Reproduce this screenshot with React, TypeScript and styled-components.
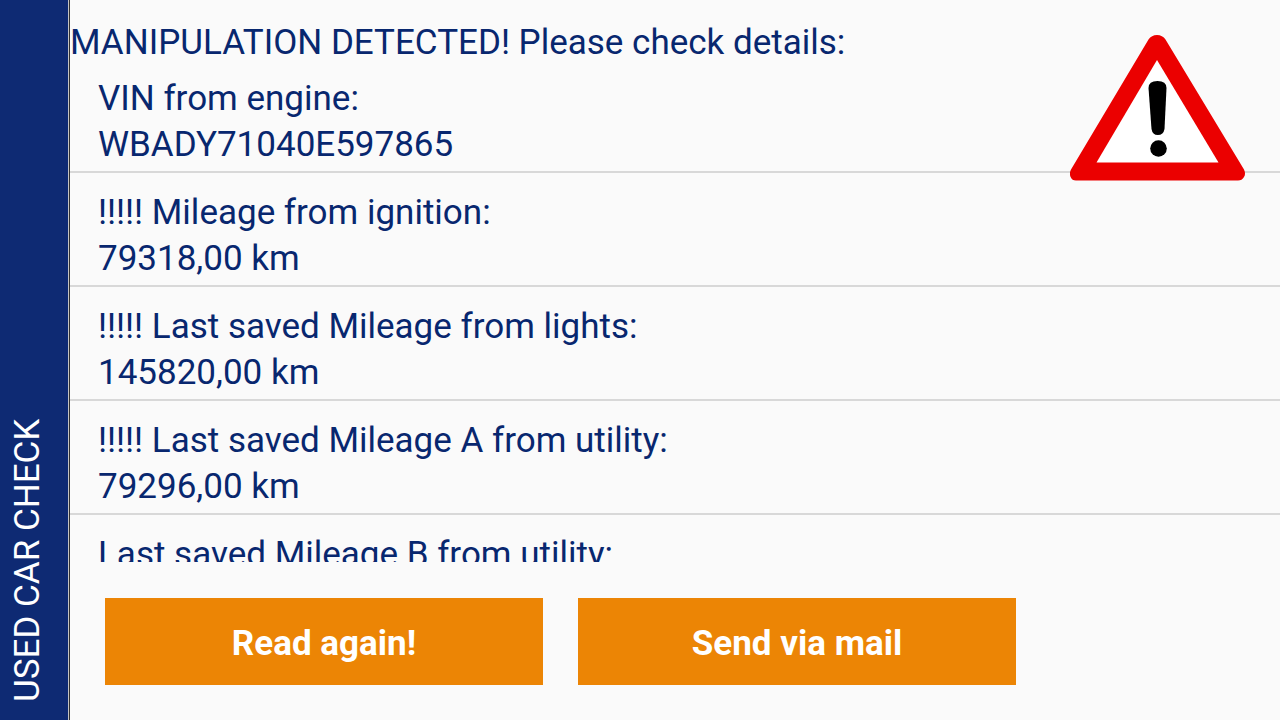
import React from "react";
import styled, { createGlobalStyle } from "styled-components";

const GlobalStyle = createGlobalStyle`
  * { box-sizing: border-box; }
  body {
    margin: 0;
    background: #fafafa;
    color: #08276f;
    font-family: Roboto, "Liberation Sans", sans-serif;
    font-size: 35px;
  }
`;

const Screen = styled.div`
  display: flex;
  height: 100vh;
`;

const Sidebar = styled.aside`
  flex: none;
  display: flex;
  width: 70px;
  padding: 0 20px 18px 7px;
  background: #0e2a73;
  border-right: 1px solid #333333;
  box-shadow: inset -1px 0 #c4c4c4;
`;

const SidebarTitle = styled.h1`
  margin: 0;
  writing-mode: vertical-rl;
  transform: rotate(180deg);
  color: #ffffff;
  font-size: 35px;
  font-weight: 400;
  line-height: 42px;
  white-space: nowrap;
`;

const Main = styled.main`
  position: relative;
  flex: 1;
  min-width: 0;
  display: flex;
  flex-direction: column;
`;

const Heading = styled.h2`
  margin: 0;
  padding-top: 27px;
  font-size: 35px;
  font-weight: 400;
  line-height: 32px;
`;

const Results = styled.dl`
  flex: 1;
  min-height: 0;
  margin: 0;
  overflow-y: auto;
  scrollbar-width: none;
`;

const Result = styled.div`
  padding: 17px 28px 3px;
  border-bottom: 2px solid #d8d8d8;
  line-height: 46px;
`;

const Label = styled.dt``;

const Value = styled.dd`
  margin: 0;
`;

const WarningIcon = styled.svg`
  position: absolute;
  top: 35px;
  right: 35px;
  width: 175px;
  height: 146px;
`;

const Actions = styled.footer`
  display: flex;
  gap: 35px;
  padding: 36px 264px 35px 35px;
`;

const ActionButton = styled.button`
  flex: 1;
  height: 87px;
  padding: 4px 0 0;
  border: 0;
  background: #ec8505;
  color: #ffffff;
  font: inherit;
  font-weight: 700;
  cursor: pointer;
`;

const results = [
  { label: "VIN from engine:", value: "WBADY71040E597865" },
  { label: "!!!!! Mileage from ignition:", value: "79318,00 km" },
  { label: "!!!!! Last saved Mileage from lights:", value: "145820,00 km" },
  { label: "!!!!! Last saved Mileage A from utility:", value: "79296,00 km" },
  { label: "Last saved Mileage B from utility:", value: "" },
];

export default function App() {
  return (
    <>
      <GlobalStyle />
      <Screen>
        <Sidebar>
          <SidebarTitle>USED CAR CHECK</SidebarTitle>
        </Sidebar>
        <Main>
          <Heading>MANIPULATION DETECTED! Please check details:</Heading>
          <Results>
            {results.map(({ label, value }) => (
              <Result key={label}>
                <Label>{label}</Label>
                <Value>{value}</Value>
              </Result>
            ))}
          </Results>
          <Actions>
            <ActionButton type="button">Read again!</ActionButton>
            <ActionButton type="button">Send via mail</ActionButton>
          </Actions>
          <WarningIcon viewBox="0 0 175 146" role="img" aria-label="Warning">
            <path
              fill="#eb0000"
              d="M78.5 4.5Q81.500 0 87 0Q92.500 0 95.500 4.500L174 134.500Q176 139 174 142Q172 145.500 168 145.500H6Q2 145.500 .6 142Q-1 138.500 1 134.500Z"
            />
            <path fill="#ffffff" d="M87 25L148.500 127.500H26.500Z" />
            <path
              fill="#000000"
              d="M78.500 53Q78.500 46 87.500 46Q96.500 46 96.500 53L94.500 94Q93.500 100 87.800 100Q82.500 100 81.500 94Z"
            />
            <circle cx="88.500" cy="113.500" r="8.300" fill="#000000" />
          </WarningIcon>
        </Main>
      </Screen>
    </>
  );
}
